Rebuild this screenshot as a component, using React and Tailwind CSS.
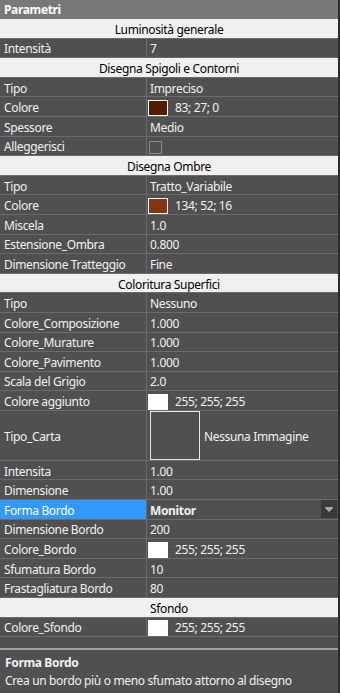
import React from "react";

const font = { fontFamily: '"Noto Sans", "Open Sans", sans-serif' };

function Header({ children }) {
  return (
    <div className="flex h-[19.6px] items-center justify-center border-b border-[#6b6b6b] bg-[#f0f0f0] pt-[3px] text-[12px] text-black">
      {children}
    </div>
  );
}

function Row({ label, children, tall, selected, nopad }) {
  return (
    <div className={tall ? "flex h-[50px] border-b border-[#6b6b6b]" : "flex h-[19.6px] border-b border-[#6b6b6b]"}>
      <div
        className={
          selected
            ? "flex w-[147px] shrink-0 items-center border-r border-[#6b6b6b] bg-[#3399ff] pl-[4px] pt-[3px] text-white"
            : "flex w-[147px] shrink-0 items-center border-r border-[#6b6b6b] pl-[4px] pt-[3px]"
        }
      >
        {label}
      </div>
      <div
        className={
          nopad
            ? "flex min-w-0 flex-1 items-center pl-[3px]"
            : "flex min-w-0 flex-1 items-center pl-[3px] pt-[3px]"
        }
      >
        {children}
      </div>
    </div>
  );
}

function Swatch({ color, text }) {
  return (
    <div className="ml-[-2px] flex items-center">
      <div className="h-[16px] w-[20px] border border-white" style={{ background: color }} />
      <span className="ml-[7px]">{text}</span>
    </div>
  );
}

export default function App() {
  return (
    <div className="flex h-[693px] w-[340px] bg-[#505050] text-[12px] tracking-[-0.35px] text-[#f0f0f0]" style={font}>
      <div className="flex w-[338px] flex-col">
        <div className="flex h-[19px] items-center bg-[#787878] pl-[4px] pt-[1px] font-bold text-white">Parametri</div>

        <Header>Luminosità generale</Header>
        <Row label="Intensità">7</Row>

        <Header>Disegna Spigoli e Contorni</Header>
        <Row label="Tipo">Impreciso</Row>
        <Row label="Colore">
          <Swatch color="#531b00" text="83; 27; 0" />
        </Row>
        <Row label="Spessore">Medio</Row>
        <Row label="Alleggerisci">
          <div className="ml-[-1px] h-[13px] w-[13px] border border-[#8a8a8a]" />
        </Row>

        <Header>Disegna Ombre</Header>
        <Row label="Tipo">Tratto_Variabile</Row>
        <Row label="Colore">
          <Swatch color="#863410" text="134; 52; 16" />
        </Row>
        <Row label="Miscela">1.0</Row>
        <Row label="Estensione_Ombra">0.800</Row>
        <Row label="Dimensione Tratteggio">Fine</Row>

        <Header>Coloritura Superfici</Header>
        <Row label="Tipo">Nessuno</Row>
        <Row label="Colore_Composizione">1.000</Row>
        <Row label="Colore_Murature">1.000</Row>
        <Row label="Colore_Pavimento">1.000</Row>
        <Row label="Scala del Grigio">2.0</Row>
        <Row label="Colore aggiunto">
          <Swatch color="#ffffff" text="255; 255; 255" />
        </Row>
        <Row label="Tipo_Carta" tall nopad>
          <div className="flex h-full items-center">
            <div className="h-[49px] w-[50px] border border-[#e8e8e8]" />
            <span className="ml-[4px] pt-[3px]">Nessuna Immagine</span>
          </div>
        </Row>
        <Row label="Intensita">1.00</Row>
        <Row label="Dimensione">1.00</Row>
        <Row label="Forma Bordo" selected nopad>
          <div className="flex w-full items-center justify-between">
            <span className="pt-[3px] font-bold">Monitor</span>
            <div className="mr-[1px] flex h-[18px] w-[16px] items-center justify-center bg-[#3a3a3a]">
              <svg width="8" height="5" viewBox="0 0 8 5">
                <rect x="0" y="0" width="8" height="1" fill="#a8a8a8" />
                <polygon points="0,1 8,1 4,5" fill="#a8a8a8" />
              </svg>
            </div>
          </div>
        </Row>
        <Row label="Dimensione Bordo">200</Row>
        <Row label="Colore_Bordo">
          <Swatch color="#ffffff" text="255; 255; 255" />
        </Row>
        <Row label="Sfumatura Bordo">10</Row>
        <Row label="Frastagliatura Bordo">80</Row>

        <Header>Sfondo</Header>
        <Row label="Colore_Sfondo">
          <Swatch color="#ffffff" text="255; 255; 255" />
        </Row>

        <div className="flex-1" />
        <div className="h-[45px] border-t-2 border-[#a0a0a0] px-[5px] pt-[4px]">
          <div className="font-bold leading-[18px]">Forma Bordo</div>
          <div className="leading-[18px]">Crea un bordo più o meno sfumato attorno al disegno</div>
        </div>
      </div>
      <div className="w-[2px] bg-[#2b2b2b]" />
    </div>
  );
}
